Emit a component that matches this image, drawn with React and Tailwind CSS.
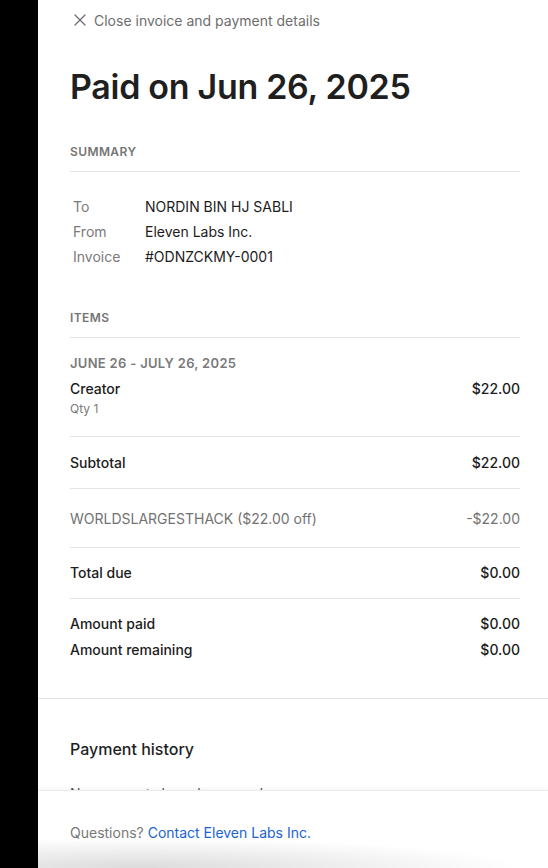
import React from "react";
import { X } from "lucide-react";

const font = { fontFamily: "Inter, 'Noto Sans', sans-serif" };

function Row({ label, value, muted = false, bold = false }) {
    return (
        <div className={`flex justify-between text-[14px] ${muted ? "text-[#727272]" : "text-[#1c1c1c]"} ${bold ? "font-medium" : ""}`}>
            <span>{label}</span>
            <span>{value}</span>
        </div>
    );
}

export default function App() {
    return (
        <div className="flex h-[868px] w-[548px] overflow-hidden bg-black" style={font}>
            {/* left dark strip */}
            <div className="w-[38px] shrink-0 bg-black" />

            {/* invoice panel */}
            <div className="relative flex flex-1 flex-col bg-white">
                <div className="flex-1 overflow-hidden">
                    <div className="pl-8 pr-7">
                        {/* close link */}
                        <div className="flex h-[40px] items-center gap-[4px] text-[14px] text-[#6e6e6e]">
                            <X size={20} strokeWidth={1.5} />
                            <span>Close invoice and payment details</span>
                        </div>

                        <h1 className="mt-[27px] text-[34px] font-semibold leading-[40px] tracking-[-0.3px] text-[#1f1f1f]">
                            Paid on Jun 26, 2025
                        </h1>

                        {/* summary */}
                        <div className="mt-[36px] border-b border-[#e3e3e3] pb-[10px] text-[12px] font-semibold tracking-[0.4px] text-[#757575]">
                            SUMMARY
                        </div>
                        <div className="mt-[26px] grid grid-cols-[72px_1fr] gap-y-[7px] pl-[3px] text-[14px] leading-[18px]">
                            <span className="text-[#7a7a7a]">To</span>
                            <span className="text-[#1c1c1c]">NORDIN BIN HJ SABLI</span>
                            <span className="text-[#7a7a7a]">From</span>
                            <span className="text-[#1c1c1c]">Eleven Labs Inc.</span>
                            <span className="text-[#7a7a7a]">Invoice</span>
                            <span className="text-[#1c1c1c]">#ODNZCKMY-0001</span>
                        </div>

                        {/* items */}
                        <div className="mt-[43px] border-b border-[#e3e3e3] pb-[10px] text-[12px] font-semibold tracking-[0.4px] text-[#757575]">
                            ITEMS
                        </div>
                        <div className="border-b border-[#e3e3e3] pt-[16px] pb-[18px]">
                            <div className="text-[13px] font-semibold tracking-[0.3px] text-[#7a7a7a]">
                                JUNE 26 - JULY 26, 2025
                            </div>
                            <div className="mt-[6px] leading-[18px]">
                                <Row label="Creator" value="$22.00" bold />
                            </div>
                            <div className="mt-[2px] text-[12px] text-[#7a7a7a]">Qty 1</div>
                        </div>

                        <div className="flex h-[52px] items-center border-b border-[#e3e3e3]">
                            <div className="w-full"><Row label="Subtotal" value="$22.00" bold /></div>
                        </div>
                        <div className="flex h-[59px] items-center border-b border-[#e3e3e3] pt-[2px]">
                            <div className="w-full"><Row label="WORLDSLARGESTHACK ($22.00 off)" value="-$22.00" muted /></div>
                        </div>
                        <div className="flex h-[51px] items-center border-b border-[#e3e3e3]">
                            <div className="w-full"><Row label="Total due" value="$0.00" bold /></div>
                        </div>
                        <div className="flex flex-col gap-[8px] pt-[16px] leading-[18px]">
                            <Row label="Amount paid" value="$0.00" bold />
                            <Row label="Amount remaining" value="$0.00" bold />
                        </div>
                    </div>

                    <div className="mt-[39px] border-b border-[#e3e3e3]" />

                    <div className="pl-8 pr-7">
                        <div className="mt-[38px] text-[16px] font-medium text-[#1f1f1f]">Payment history</div>
                        <div className="mt-[22px] text-[14px] text-[#555]">No payments have been made</div>
                    </div>
                </div>

                {/* footer */}
                <div className="relative h-[78px] shrink-0 border-t border-[#ececec] bg-white shadow-[0_-2px_3px_rgba(0,0,0,0.04)]">
                    <div className="pl-8 pt-[31px] text-[14px] text-[#777]">
                        Questions? <span className="text-[#1b63d1]">Contact Eleven Labs Inc.</span>
                    </div>
                    <div className="pointer-events-none absolute inset-x-0 bottom-0 h-[30px] bg-[radial-gradient(ellipse_380px_30px_at_20%_100%,rgba(0,0,0,0.14),rgba(0,0,0,0))]" />
                </div>
            </div>
        </div>
    );
}
